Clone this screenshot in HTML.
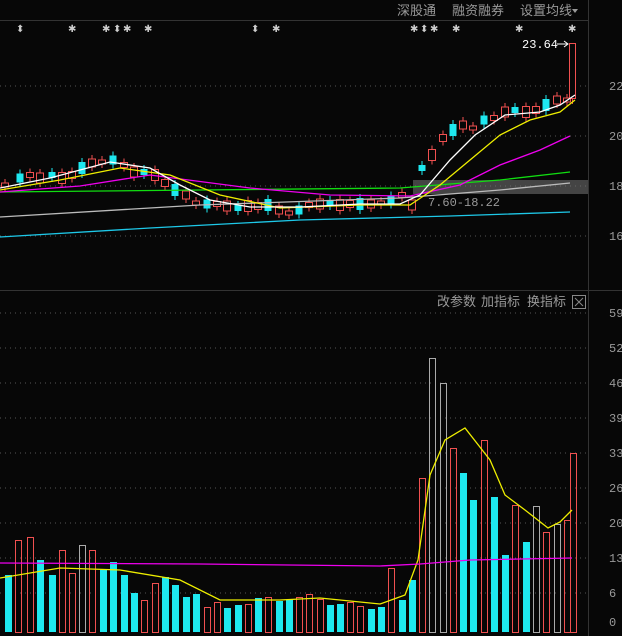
<!DOCTYPE html><html><head><meta charset="utf-8"><style>
body{margin:0;background:#070707;width:622px;height:636px;overflow:hidden;font-family:"Liberation Sans","Noto Sans CJK SC",sans-serif}
svg{position:absolute;left:0;top:0}
</style></head><body>
<svg id="s" width="622" height="636" xmlns="http://www.w3.org/2000/svg">
<g stroke="#555" stroke-dasharray="1,4" stroke-width="1">
<line x1="0" y1="86" x2="588" y2="86"/><line x1="0" y1="136" x2="588" y2="136"/><line x1="0" y1="186" x2="588" y2="186"/><line x1="0" y1="236" x2="588" y2="236"/>
<line x1="0" y1="313" x2="588" y2="313"/><line x1="0" y1="348" x2="588" y2="348"/><line x1="0" y1="383" x2="588" y2="383"/><line x1="0" y1="418" x2="588" y2="418"/><line x1="0" y1="453" x2="588" y2="453"/><line x1="0" y1="488" x2="588" y2="488"/><line x1="0" y1="523" x2="588" y2="523"/><line x1="0" y1="558" x2="588" y2="558"/><line x1="0" y1="593" x2="588" y2="593"/>
</g>
<line x1="0" y1="20.5" x2="588" y2="20.5" stroke="#333"/>
<line x1="0" y1="290.5" x2="622" y2="290.5" stroke="#333"/>
<line x1="588.5" y1="0" x2="588.5" y2="636" stroke="#333"/>
<rect x="413" y="180" width="175" height="14" fill="#777" opacity="0.55"/>
<g font-size="13" fill="#999">
<text x="397" y="15">深股通</text><text x="452" y="15">融资融券</text><text x="520" y="15">设置均线</text>
<text x="437" y="306">改参数</text><text x="481" y="306">加指标</text><text x="527" y="306">换指标</text>
</g>
<polygon points="572,9 578,9 575,13" fill="#999"/>
<rect x="572.5" y="295.5" width="13" height="13" fill="none" stroke="#888"/>
<path d="M575,298 L583,306 M583,298 L575,306" stroke="#888"/>
<g font-size="12" fill="#999" font-family="Liberation Mono,monospace">
<text x="609" y="90">22</text><text x="609" y="140">20</text><text x="609" y="190">18</text><text x="609" y="240">16</text>
<text x="609" y="317">59</text><text x="609" y="352">52</text><text x="609" y="387">46</text><text x="609" y="422">39</text><text x="609" y="457">33</text><text x="609" y="492">26</text><text x="609" y="527">20</text><text x="609" y="562">13</text><text x="609" y="597">6</text><text x="609" y="626">0</text>
<text x="522" y="48" fill="#fff">23.64</text><text x="428" y="206">7.60-18.22</text>
</g>
<path d="M557,44 H568 M564,41 L568,44 L564,47" stroke="#fff" fill="none"/>
<g font-size="10" fill="#ccc" id="stars"></g>
<g id="c"></g>
<g fill="none" stroke-width="1.3">
<polyline stroke="#1ec8e8" points="0,237 150,228 300,220 450,216 570,212"/>
<polyline stroke="#bbb" points="0,217 200,205 400,198 500,190 570,183"/>
<polyline stroke="#1d1" points="0,192 200,190 400,188 500,180 570,172"/>
<polyline stroke="#e0e" points="0,192 80,186 150,175 250,188 330,195 410,196 460,185 500,165 540,150 570,136"/>
<polyline stroke="#ee0" points="0,190 60,180 120,168 170,175 220,195 280,208 360,205 410,205 440,185 470,160 500,135 530,120 560,112 575,100"/>
<polyline stroke="#fff" points="0,188 50,178 110,162 150,168 180,185 210,200 250,207 300,207 360,204 400,204 420,195 450,160 475,135 505,115 540,112 560,105 575,95"/>
<polyline stroke="#ee0" points="0,578 60,568 120,570 180,580 220,600 280,600 320,598 380,604 405,595 418,560 430,475 445,440 465,428 490,460 505,495 525,510 548,528 560,522 572,510"/>
<polyline stroke="#e0e" points="0,563 200,564 380,566 420,564 470,560 572,558"/>
</g>
</svg>
<script>
var V=[[8,575,0],[18,540,1],[30,537,1],[40,560,0],[52,575,0],[62,550,1],[72,573,1],[82,545,2],[92,550,1],[103,570,0],[113,562,0],[124,575,0],[134,593,0],[144,600,1],[155,583,1],[165,577,0],[175,585,0],[186,597,0],[196,594,0],[207,607,1],[217,602,1],[227,608,0],[238,605,0],[248,604,1],[258,598,0],[268,597,1],[279,601,0],[289,600,0],[299,597,1],[309,594,1],[320,599,1],[330,605,0],[340,604,0],[350,602,1],[360,606,1],[371,609,0],[381,607,0],[391,568,1],[402,600,0],[412,580,0],[422,478,1],[432,358,2],[443,383,2],[453,448,1],[463,473,0],[473,500,0],[484,440,1],[494,497,0],[505,555,0],[515,505,1],[526,542,0],[536,506,2],[546,532,1],[557,524,2],[567,520,1],[573,453,1]];
var P=[5,185,20,178,30,175,40,178,52,175,62,178,72,175,82,168,92,163,102,162,113,160,124,165,134,172,144,172,155,175,165,183,175,190,186,195,196,203,207,204,217,204,227,206,238,208,248,206,258,206,268,205,279,210,289,213,299,210,309,205,320,204,330,203,340,205,350,204,360,204,371,204,381,203,391,200,402,195,412,205,422,168,432,155,443,138,453,130,463,125,473,128,484,120,494,118,505,112,515,110,526,112,536,110,546,105,557,100,567,100];
var h='';V.forEach(function(v){var x=v[0]-3,c=v[2]==0?'#1ee8f0':v[2]==1?'#f05050':'#aaa';
if(v[2]==0)h+='<rect x="'+x+'" y="'+v[1]+'" width="7" height="'+(632-v[1])+'" fill="'+c+'"/>';
else h+='<rect x="'+(x+.5)+'" y="'+(v[1]+.5)+'" width="6" height="'+(632-v[1])+'" fill="none" stroke="'+c+'"/>';});
for(var i=0;i<P.length;i+=2){var x=P[i],y=P[i+1],up=(i/2)%3!=1,c=up?'#f05050':'#1ee8f0',bh=4+(i*7)%9;
h+='<line x1="'+x+'" y1="'+(y-bh/2-4)+'" x2="'+x+'" y2="'+(y+bh/2+4)+'" stroke="'+c+'"/>';
h+=up?'<rect x="'+(x-3.5)+'" y="'+(y-bh/2)+'" width="7" height="'+bh+'" fill="#070707" stroke="'+c+'"/>':'<rect x="'+(x-3.5)+'" y="'+(y-bh/2)+'" width="7" height="'+bh+'" fill="'+c+'"/>';}
h+='<rect x="569.5" y="43.5" width="6" height="55" fill="#070707" stroke="#f05050"/><line x1="572.5" y1="99" x2="572.5" y2="104" stroke="#f05050"/>';
document.getElementById('c').innerHTML=h;
var S=[[20,'⬍'],[72,'✱'],[106,'✱'],[117,'⬍'],[127,'✱'],[148,'✱'],[255,'⬍'],[276,'✱'],[414,'✱'],[424,'⬍'],[434,'✱'],[456,'✱'],[519,'✱'],[572,'✱']],t='';
S.forEach(function(s){t+='<text x="'+(s[0]-4)+'" y="32">'+s[1]+'</text>';});
document.getElementById('stars').innerHTML=t;
</script>
</body></html>
